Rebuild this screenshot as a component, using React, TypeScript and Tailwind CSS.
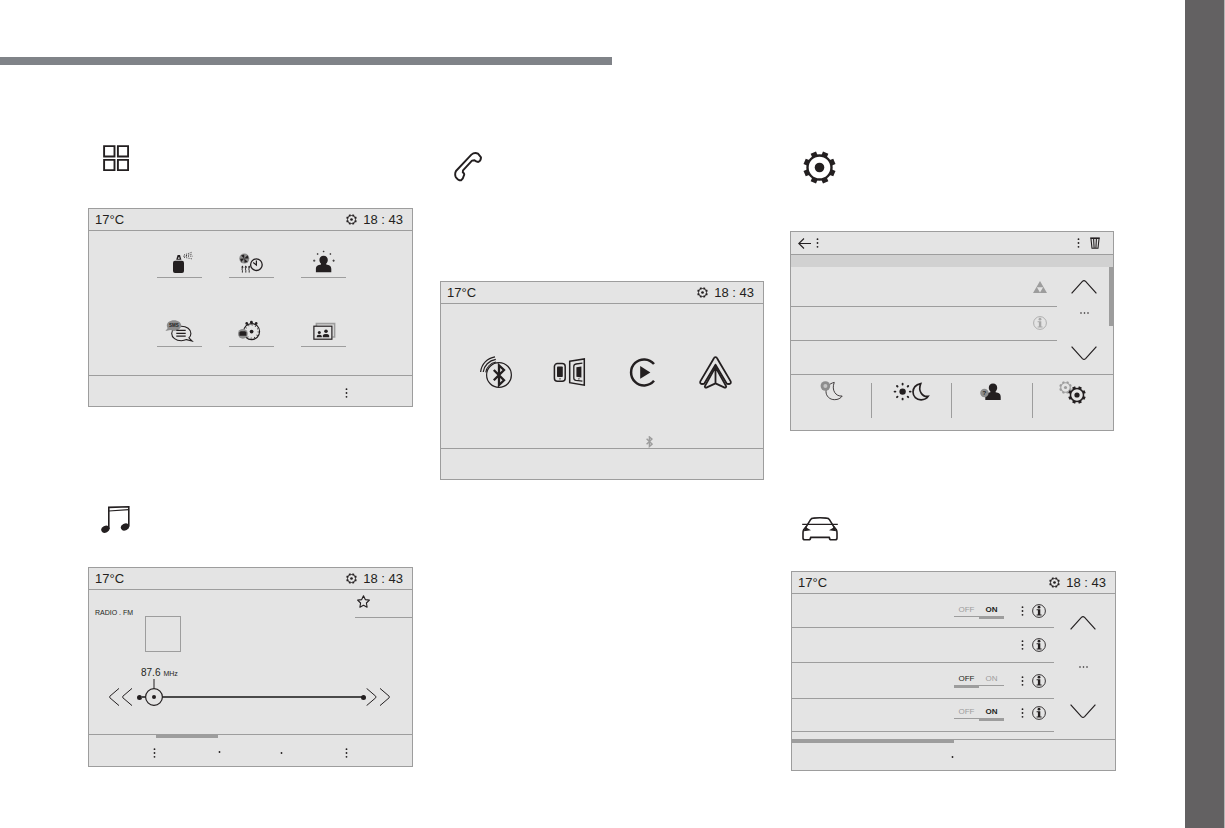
import type { ReactNode } from "react";
import { useState } from "react";

const INK = "#231f20";
const GREY = "#9d9d9d";

function Gear({ size, color = INK, ring = 2.6, hub = 4.8 }: { size: number; color?: string; ring?: number; hub?: number }) {
  const teeth = [22.5, 67.5, 112.5, 157.5, 202.5, 247.5, 292.5, 337.5];
  return (
    <svg width={size} height={size} viewBox="0 0 33 33" aria-hidden="true">
      <circle cx="16.5" cy="16.5" r="12" fill="none" stroke={color} strokeWidth={ring} />
      {teeth.map((a) => (
        <rect key={a} x="13.6" y="0.4" width="5.8" height="4.4" fill={color} transform={`rotate(${a} 16.5 16.5)`} />
      ))}
      <circle cx="16.5" cy="16.5" r={hub} fill={color} />
    </svg>
  );
}

function Dots({ count = 3 }: { count?: 1 | 3 }) {
  return (
    <svg width="3" height="10" viewBox="0 0 3 10" fill={INK} aria-hidden="true">
      {count === 3 && <circle cx="1.5" cy="1.2" r="0.9" />}
      <circle cx="1.5" cy="5" r="0.9" />
      {count === 3 && <circle cx="1.5" cy="8.8" r="0.9" />}
    </svg>
  );
}

function Info({ color = INK }: { color?: string }) {
  return (
    <svg width="14" height="14" viewBox="0 0 14 14" aria-hidden="true">
      <circle cx="7" cy="7" r="6.4" fill="none" stroke={color} strokeWidth="0.9" />
      <circle cx="7" cy="3.2" r="1.4" fill={color} />
      <path d="M4.6 5.2H8.3V10.6H9.6V11.6H4.6V10.6H5.9V6.2H4.6Z" fill={color} />
    </svg>
  );
}

function Chevron({ down = false }: { down?: boolean }) {
  return (
    <svg width="26" height="14" viewBox="0 0 26 14" fill="none" stroke={INK} strokeWidth="1.2" aria-hidden="true">
      <path d={down ? "M.6 .6 11.4 12.6Q13 14 14.6 12.6L25.4 .6" : "M.6 13.4 11.4 1.4Q13 0 14.6 1.4L25.4 13.4"} />
    </svg>
  );
}

function Scroller({ className, dotsClassName = "" }: { className: string; dotsClassName?: string }) {
  return (
    <div className={`flex flex-col items-center justify-between ${className}`}>
      <button aria-label="Scroll up" className="block"><Chevron /></button>
      <svg width="9" height="2" viewBox="0 0 9 2" fill={INK} className={dotsClassName} aria-hidden="true">
        <circle cx="1" cy="1" r="0.8" />
        <circle cx="4.5" cy="1" r="0.8" />
        <circle cx="8" cy="1" r="0.8" />
      </svg>
      <button aria-label="Scroll down" className="block"><Chevron down /></button>
    </div>
  );
}

function StatusBar() {
  return (
    <header className="flex h-[22px] shrink-0 items-center border-b border-[#9d9d9d] pr-[9px] pl-[6px] text-[13px] leading-5">
      <span>17°C</span>
      <span className="ml-auto flex items-center gap-[6px]">
        <Gear size={11} ring={2.8} hub={4} />
        <span className="whitespace-pre">18 : 43</span>
      </span>
    </header>
  );
}

function Screen({ label, className = "", children }: { label: string; className?: string; children: ReactNode }) {
  return (
    <section aria-label={label} className={`flex flex-col border border-[#9d9d9d] bg-[#e4e4e4] ${className}`}>
      {children}
    </section>
  );
}

function AppIcon({ children }: { children: ReactNode }) {
  return (
    <svg width="45" height="28" viewBox="0 0 45 28" aria-hidden="true">
      {children}
    </svg>
  );
}

const person = "c-2.7 0-4.2 1.9-4.2 4.2 0 1.6.7 2.8 1.6 3.6v.9c-2.9.5-5.1 1.4-5.1 4.6v3.2h15.4v-3.2c0-3.2-2.2-4.1-5.1-4.6v-.9c.9-.8 1.6-2 1.6-3.6 0-2.3-1.5-4.2-4.2-4.2z";

const apps: { label: string; icon: ReactNode }[] = [
  {
    label: "Fragrance",
    icon: (
      <>
        <rect x="16" y="11.7" width="11" height="12.2" rx="2" fill={INK} />
        <path d="M20.6 6h2.4l1.4 4.7h-5.2z" fill={INK} />
        <path d="M21 8.6h1.6v1.2H21z" fill="#e4e4e4" />
        <path d="M26.4 7.2H36M27 6 35.6 3M27 8.2 35.6 10M29 6.6 35 5.2" stroke={INK} strokeWidth="0.9" strokeDasharray="1 1.3" fill="none" />
      </>
    ),
  },
  {
    label: "Climate programming",
    icon: (
      <>
        <circle cx="15.3" cy="9.6" r="5" fill="#8d8d8d" />
        <path d="M15.3 9.6 12 6.4l3.2-1zM15.3 9.6l3.2-3.4 1 3.2zM15.3 9.6l3.4 3.2-3.2 1zM15.3 9.6 12.2 13l-1.1-3.2z" fill={INK} />
        <path d="M13.4 23.6v-2.3q-.8-1.2 0-2.4v-1.6M16.8 23.6v-2.3q-.8-1.2 0-2.4v-1.6M20.2 23.6v-2.3q-.8-1.2 0-2.4v-1.6" stroke={INK} strokeWidth="0.9" fill="none" />
        <path d="m12.1 18.4 1.3-2 1.3 2zM15.5 18.4l1.3-2 1.3 2zM18.9 18.4l1.3-2 1.3 2z" fill={INK} />
        <circle cx="27.4" cy="15.7" r="5.8" fill="none" stroke={INK} strokeWidth="1.3" />
        <path d="M27.4 11.6V16L24.2 13.6" stroke={INK} strokeWidth="1.2" fill="none" />
      </>
    ),
  },
  {
    label: "Profile",
    icon: (
      <>
        <path d={`M22.6 6.8${person}`} fill={INK} />
        <path d="M12 11.7h2.4M13.2 10.5v2.4M31.4 11.7h2.4M32.6 10.5v2.4M15.8 5h1.6M16.6 4.2v1.6M28.6 5h1.6M29.4 4.2v1.6M21.8 2.5h1.6M22.6 1.7v1.6" stroke={INK} strokeWidth="0.7" />
      </>
    ),
  },
  {
    label: "Messages",
    icon: (
      <>
        <path d="M24.3 8.2c5.4 0 9.6 3.2 9.6 7.2 0 1.7-.8 3.2-2 4.4l3.2 3.2-5.6-1.4c-1.5.7-3.2 1.1-5.2 1.1-5.4 0-9.6-3.2-9.6-7.3 0-4 4.2-7.2 9.6-7.2z" fill="none" stroke={INK} strokeWidth="1.1" />
        <path d="M17 2.3c4 0 7.2 2.3 7.2 5.3s-3.2 5.3-7.2 5.3c-1.3 0-2.6-.3-3.7-.8L8.4 13l2.2-2.8c-.5-.8-.8-1.7-.8-2.6 0-3 3.2-5.3 7.2-5.3z" fill="#8d8d8d" />
        <text x="17" y="9.3" textAnchor="middle" fontSize="4.5" fontWeight="700" fill={INK}>SMS</text>
        <path d="M19.3 12.4h9.4M19.3 15.3h9.4M19.3 18.2h9.4" stroke={INK} strokeWidth="1.3" />
      </>
    ),
  },
  {
    label: "Timer",
    icon: (
      <>
        <circle cx="22.6" cy="13.6" r="8" fill="none" stroke={INK} strokeWidth="1.1" />
        <circle cx="22.6" cy="13.6" r="6.6" fill="none" stroke={INK} strokeWidth="1.2" strokeDasharray="0.8 2.65" />
        <circle cx="17.7" cy="5.4" r="1.3" fill={INK} />
        <circle cx="22.4" cy="4.2" r="1.4" fill={INK} />
        <circle cx="27.2" cy="5.4" r="1.3" fill={INK} />
        <path d="m17.7 5.4 1.4 1.8M22.4 4.2v2M27.2 5.4l-1.4 1.8" stroke={INK} strokeWidth="1.2" />
        <circle cx="22.6" cy="13.6" r="1.9" fill={INK} />
        <circle cx="13.9" cy="15.8" r="4.9" fill="#8d8d8d" />
        <path d="M10.4 14.6 11.6 13.2h4.6l1.2 1.4v3.2h-7z" fill={INK} />
      </>
    ),
  },
  {
    label: "Photos",
    icon: (
      <>
        <path d="M15.4 8V5.6H33.6V19H31.6" fill="none" stroke={GREY} strokeWidth="1.6" />
        <rect x="12.9" y="8.2" width="18" height="13" fill="none" stroke={INK} strokeWidth="1.2" />
        <circle cx="18.3" cy="14.6" r="1.5" fill={INK} />
        <circle cx="25" cy="13.3" r="1.8" fill={INK} />
        <path d="M15.8 19.2v-1.2q.4-1.2 2.5-1.2t2.5 1.2v1.2zM21.8 19.2v-1.8q.5-1.4 3.2-1.4t3.2 1.4v1.8z" fill={INK} />
      </>
    ),
  },
];

const phoneModes: { label: string; icon: ReactNode }[] = [
  {
    label: "Bluetooth",
    icon: (
      <>
        <circle cx="19" cy="19" r="12.4" fill="none" stroke={INK} strokeWidth="1.2" />
        <path d="M13.8 14 24 24.3 19 29V9.4L24 14 13.8 24.3" fill="none" stroke={INK} strokeWidth="2.3" />
        <path d="M.6 16C1.4 8 7.4 2 15 .8M3.2 16C4 9.6 9 4.6 15.8 3.4M5.8 16.4C6.6 11.2 10.6 7 16 6" fill="none" stroke={INK} strokeWidth="1.2" />
      </>
    ),
  },
  {
    label: "Mirror screen",
    icon: (
      <>
        <rect x="1.4" y="7.6" width="10.8" height="17.6" rx="3" fill="none" stroke={INK} strokeWidth="1.5" />
        <rect x="4" y="10.6" width="5.8" height="10.4" rx="0.8" fill={INK} />
        <path d="M5.8 22.4h2.4l-1.2 1.4z" fill={INK} />
        <path d="M16.7 5.3 31.3 3V29.2L16.7 26.7Z" fill="none" stroke={INK} strokeWidth="1.5" />
        <path d="M29.4 7.2 23 8Q20.8 8.4 20.8 10.4V22Q20.8 24 23 24.4L29.4 25.2" fill="none" stroke={INK} strokeWidth="1.3" />
        <path d="M23.4 11.2 28.4 10.6V21.4L23.4 20.8Z" fill={INK} />
        <path d="M24.8 22.4h2.2l-1.1 1.4z" fill={INK} />
      </>
    ),
  },
  {
    label: "CarPlay",
    icon: (
      <>
        <path d="M28 8A13 13 0 1 0 28 24.8" fill="none" stroke={INK} strokeWidth="2.5" />
        <path d="M14.2 10 24.4 16.4 14.2 22.8Z" fill={INK} />
      </>
    ),
  },
  {
    label: "Android Auto",
    icon: (
      <g fill="none" stroke={INK} strokeWidth="1.8" strokeLinejoin="round">
        <path d="M16.5 1.2Q15.3 1.2 14.5 3L1.3 25.4Q.7 27.8 2.9 28L5.2 27.8 16.5 8.6 27.8 27.8 30.1 28Q32.3 27.8 31.7 25.4L18.5 3Q17.7 1.2 16.5 1.2Z" />
        <path d="M16.5 11 5.8 30.4Q6 31.9 7.4 31.6L16.5 27.4 25.6 31.6Q27 31.9 27.2 30.4ZM16.5 11V27.4" />
      </g>
    ),
  },
];

const moon = "M9 0C3.6 1.2 0 4.8 0 9.4 0 14.4 4 18 9.4 18c3.6 0 6.6-1.4 8.2-3.8C10.6 15 5.6 8 9 0Z";

const shortcuts: { label: string; icon: ReactNode }[] = [
  {
    label: "Dark screen",
    icon: (
      <svg width="22" height="20" viewBox="0 0 22 20" className="overflow-visible" aria-hidden="true">
        <path d={moon} transform="translate(6 -.6) scale(.92 .96)" fill="none" stroke={INK} strokeWidth="0.9" />
        <circle cx="5.4" cy="3" r="4.8" fill="#8d8d8d" />
        <circle cx="5.4" cy="3" r="2" fill="#c4c4c4" />
      </svg>
    ),
  },
  {
    label: "Brightness",
    icon: (
      <svg width="36" height="20" viewBox="0 0 36 20" className="overflow-visible" aria-hidden="true">
        <circle cx="9.6" cy="8.6" r="3.2" fill={INK} />
        <g stroke={INK} strokeWidth="1.9" strokeLinecap="round">
          <path d="M9.6 .8v.8M9.6 15.6v.8M1.6 8.6h.8M16.8 8.6h.8M4 3l.5.5M14.7 13.7l.5.5M15.2 3l-.5.5M4.5 13.7 4 14.2" />
        </g>
        <path d={moon} transform="translate(20 .6) scale(.86 .9)" fill="none" stroke={INK} strokeWidth="1.9" />
      </svg>
    ),
  },
  {
    label: "Profiles",
    icon: (
      <svg width="24" height="20" viewBox="0 0 24 20" className="overflow-visible" aria-hidden="true">
        <path d={`M13 .6${person}`} fill={INK} />
        <circle cx="4.4" cy="10" r="4.2" fill="#8d8d8d" />
        <text x="4.4" y="12.2" textAnchor="middle" fontSize="6" fontWeight="700" fill={INK}>?</text>
      </svg>
    ),
  },
  {
    label: "Configuration",
    icon: (
      <span className="flex">
        <span className="-mt-0.5 block"><Gear size={13} color={GREY} ring={2.8} hub={4} /></span>
        <span className="-ml-1 mt-[3px] block"><Gear size={18} ring={2.8} /></span>
      </span>
    ),
  },
];

function Toggle({ name, initial }: { name: string; initial: boolean }) {
  const [on, setOn] = useState(initial);
  return (
    <div role="group" aria-label={name} className="flex items-start text-[8px] leading-[10px]">
      <button
        aria-pressed={!on}
        onClick={() => setOn(false)}
        className={`w-[25px] border-[#9d9d9d] ${on ? "h-[13px] border-b text-[#9d9d9d]" : "h-[15px] border-b-3"}`}
      >
        OFF
      </button>
      <button
        aria-pressed={on}
        onClick={() => setOn(true)}
        className={`w-[25px] border-[#9d9d9d] ${on ? "h-[15px] border-b-3 font-bold" : "h-[13px] border-b text-[#9d9d9d]"}`}
      >
        ON
      </button>
    </div>
  );
}

function VehicleRow({ name, toggle, className }: { name: string; toggle?: boolean; className: string }) {
  return (
    <li className={`flex items-center justify-end border-b border-[#9d9d9d] pr-2 ${className}`}>
      {toggle !== undefined && <Toggle name={name} initial={toggle} />}
      <button aria-label={`${name} options`} className="ml-[17px] block"><Dots /></button>
      <button aria-label={`${name} information`} className="ml-2 block"><Info /></button>
    </li>
  );
}

function Tuner() {
  const [freq, setFreq] = useState(87.6);
  const shift = ((freq - 87.6) / 20.4) * 100;
  return (
    <div>
      <label htmlFor="tuner" className="mt-[15px] ml-[52px] flex items-baseline gap-[3px] text-[10px] leading-3">
        {freq.toFixed(1)} <span className="text-[7px]">MHz</span>
      </label>
      <div className="mt-2 flex items-center pr-[22px] pl-5">
        <button aria-label="Seek down" className="block">
          <svg width="23" height="18" viewBox="0 0 23 18" fill="none" stroke={INK} strokeWidth="1" aria-hidden="true">
            <path d="M10 .4.9 8.2Q.3 9 .9 9.8L10 17.6M23 .4 13.9 8.2Q13.3 9 13.9 9.8L23 17.6" />
          </svg>
        </button>
        <div className="relative ml-[5px] flex h-[18px] flex-1 items-center">
          <span className="size-[5px] rounded-full bg-[#231f20]" />
          <span className="-mx-px h-0.5 flex-1 bg-[#4a4a4a]" />
          <span className="size-[5px] rounded-full bg-[#231f20]" />
          <span className="absolute inset-y-0 right-0 left-2">
            <span className="absolute top-0 size-[18px]" style={{ left: `${shift}%` }}>
              <svg width="18" height="27" viewBox="0 -9 18 27" className="absolute bottom-0 left-0" aria-hidden="true">
                <path d="M9-9V0" stroke={INK} strokeWidth="1" />
                <circle cx="9" cy="9" r="8.4" fill="#e4e4e4" stroke={INK} strokeWidth="1.2" />
                <circle cx="9" cy="9" r="2" fill={INK} />
              </svg>
            </span>
          </span>
          <input
            id="tuner"
            type="range"
            min="87.6"
            max="108"
            step="0.1"
            value={freq}
            onChange={(e) => setFreq(Number(e.target.value))}
            className="absolute inset-0 w-full cursor-pointer opacity-0"
          />
        </div>
        <button aria-label="Seek up" className="block">
          <svg width="24" height="18" viewBox="0 0 24 18" fill="none" stroke={INK} strokeWidth="1" aria-hidden="true">
            <path d="M.6 .4 9.7 8.2Q10.3 9 9.7 9.8L.6 17.6M14 .4 23.1 8.2Q23.7 9 23.1 9.8L14 17.6" />
          </svg>
        </button>
      </div>
    </div>
  );
}

export default function App() {
  return (
    <div className="flex min-h-screen bg-white font-['Liberation_Sans',Arial,sans-serif] text-[#231f20]">
      <main className="flex-1 pt-[57px] pb-14">
        <div className="h-2 w-[612px] max-w-full bg-[#808388]" />
        <div className="grid grid-cols-[325fr_325fr_326fr] items-start gap-[26px] pr-[69px] pl-[88px]">
          <div className="pt-20">
            <div className="h-[63px] pl-[15px]">
              <svg width="26" height="26" viewBox="0 0 26 26" fill="none" stroke={INK} strokeWidth="1.9" aria-hidden="true">
                <path d="M1.1 1.1h10.4v10.4H1.1zM14.9 1.1h10.2v10.4H14.9zM1.1 14.9h10.4v10.2H1.1zM14.9 14.9h10.2v10.2H14.9z" />
              </svg>
            </div>
            <Screen label="Applications">
              <StatusBar />
              <div className="grid h-36 grid-cols-[45px_45px_45px] content-start gap-x-[27px] gap-y-10 pt-[18px] pl-[68px]">
                {apps.map((a) => (
                  <button key={a.label} aria-label={a.label} className="block h-[29px] border-b border-[#9d9d9d]">
                    <AppIcon>{a.icon}</AppIcon>
                  </button>
                ))}
              </div>
              <footer className="flex h-[31px] items-center justify-end border-t border-[#9d9d9d] pt-1 pr-16">
                <button aria-label="More options" className="block"><Dots /></button>
              </footer>
            </Screen>

            <div className="mt-[99px] h-[61px] pl-[13px]">
              <svg width="29" height="28" viewBox="0 0 29 28" fill="none" stroke={INK} aria-hidden="true">
                <path d="M7.8 23V1.4L27.8.8V20.6" strokeWidth="1.6" />
                <path d="M7.8 5 27.8 3.6" strokeWidth="1.2" />
                <ellipse cx="4.4" cy="23.2" rx="4.3" ry="3.4" transform="rotate(-28 4.4 23.2)" fill={INK} stroke="none" />
                <ellipse cx="24" cy="21" rx="4.3" ry="3.4" transform="rotate(-28 24 21)" fill={INK} stroke="none" />
              </svg>
            </div>
            <Screen label="Radio media">
              <StatusBar />
              <div className="h-36">
                <div className="flex items-start pl-[6px]">
                  <span className="mt-[19px] w-[50px] text-[7px] leading-2">RADIO . FM</span>
                  <div className="mt-[26px] size-9 border border-[#9d9d9d]" />
                  <button aria-label="Add to favourites" className="ml-auto block h-7 w-[57px] border-b border-[#9d9d9d] pb-1 pl-0.5">
                    <svg width="13" height="13" viewBox="0 0 13 13" fill="none" stroke={INK} strokeWidth="1.1" strokeLinejoin="round" aria-hidden="true">
                      <path d="M6.5.8 8.3 4.6 12.4 5.1 9.4 8 10.1 12.2 6.5 10.2 2.9 12.2 3.6 8 .6 5.1 4.7 4.6Z" />
                    </svg>
                  </button>
                </div>
                <Tuner />
              </div>
              <nav aria-label="Radio" className="grid h-8 grid-cols-[67px_65px_62px_65px] border-t border-[#9d9d9d]">
                <button aria-label="Sources" className="flex items-center justify-end pt-1"><Dots /></button>
                <button aria-label="Frequency" className="flex flex-col items-end">
                  <span className="h-[3px] w-[62px] self-start bg-[#9d9d9d]" />
                  <span className="mt-[9px]"><Dots count={1} /></span>
                </button>
                <button aria-label="Presets" className="flex items-center justify-end pt-1"><Dots count={1} /></button>
                <button aria-label="Options" className="flex items-center justify-end pt-1"><Dots /></button>
              </nav>
            </Screen>
          </div>

          <div className="pt-[87px] pl-px">
            <div className="h-[129px] pl-[14px]">
              <svg width="28" height="30" viewBox="0 0 28 30" fill="none" stroke={INK} strokeWidth="1.9" strokeLinejoin="round" aria-hidden="true">
                <path d="M2 19 17.4 2.6Q20.4 0 24 1.6L27 5.4Q27 8.4 24.2 10 22 9.8 20.4 8.2L18 8.6 9 18.4 8.8 20.4Q11 21.6 9.8 23.8 9.2 27 7 28.4 4 28.4 1.8 25.2.4 22 2 19Z" />
              </svg>
            </div>
            <Screen label="Telephone">
              <StatusBar />
              <div className="flex h-36 flex-col pt-[52px] pl-[19px]">
                <div className="grid grid-cols-[73px_73px_73px_73px]">
                  {phoneModes.map((m) => (
                    <button key={m.label} aria-label={m.label} className="flex justify-center">
                      <svg width="33" height="33" viewBox="0 0 33 33" aria-hidden="true">{m.icon}</svg>
                    </button>
                  ))}
                </div>
                <svg width="7" height="12" viewBox="0 0 7 12" fill="none" stroke={GREY} strokeWidth="1.4" className="mt-auto ml-[186px]" aria-hidden="true">
                  <path d="M.6 2.7 6 8.1 3.4 10.5V.9L6 3.1.6 8.3" />
                </svg>
              </div>
              <footer className="h-[31px] border-t border-[#9d9d9d]" />
            </Screen>
          </div>

          <div className="pt-[86px]">
            <div className="h-20 pl-[13px]"><Gear size={33} ring={2.4} /></div>
            <Screen label="Settings" className="mr-0.5">
              <header className="flex h-[23px] items-center border-b border-[#9d9d9d] pr-[13px] pl-[7px]">
                <button aria-label="Back" className="block">
                  <svg width="13" height="11" viewBox="0 0 13 11" fill="none" stroke={INK} strokeWidth="1.1" aria-hidden="true">
                    <path d="M6 .5.8 5.5 6 10.5M.8 5.5H13" />
                  </svg>
                </button>
                <span className="ml-[5px]"><Dots /></span>
                <button aria-label="Options" className="ml-auto block"><Dots /></button>
                <button aria-label="Delete" className="ml-[10px] block">
                  <svg width="10" height="12" viewBox="0 0 10 12" fill="none" stroke={INK} aria-hidden="true">
                    <path d="M.2 1.2H9.8" strokeWidth="1.6" />
                    <path d="M1 2 2 11.2H8L9 2M3.6 2 4.1 11M6.4 2 5.9 11" strokeWidth="1.1" />
                  </svg>
                </button>
              </header>
              <div className="h-3 bg-[#d1d1d1]" />
              <div className="flex h-[107px]">
                <ul className="w-[266px]">
                  <li className="flex h-10 items-center justify-end border-b border-[#9d9d9d] pr-[10px]">
                    <svg width="14" height="12" viewBox="0 0 14 12" fill={GREY} aria-hidden="true">
                      <path fillRule="evenodd" d="M7 0 14 12H0ZM3.9 6.2 7 11.4 10.1 6.2Z" />
                    </svg>
                  </li>
                  <li className="flex h-[34px] items-center justify-end border-b border-[#9d9d9d] pr-[10px] pb-0.5">
                    <button aria-label="Information" className="block"><Info color="#a8a8a8" /></button>
                  </li>
                  <li className="h-[33px]" />
                </ul>
                <Scroller className="ml-[14px] pt-[13px] pb-[14px]" dotsClassName="mb-[14px]" />
                <div className="ml-auto h-[59px] w-1 bg-[#9d9d9d]" />
              </div>
              <footer className="grid h-14 grid-cols-4 border-t border-[#9d9d9d] pt-2">
                {shortcuts.map((s) => (
                  <button
                    key={s.label}
                    aria-label={s.label}
                    className="flex h-[35px] items-start justify-center border-r border-[#9d9d9d] last:border-r-0"
                  >
                    {s.icon}
                  </button>
                ))}
              </footer>
            </Screen>

            <div className="mt-[86px] h-[54px] pl-3">
              <svg width="36" height="24" viewBox="0 0 36 24" fill="none" stroke={INK} strokeWidth="1.6" strokeLinejoin="round" aria-hidden="true">
                <path d="M2.6 12.4 8.4 2.8Q9.4 1.2 11.4 1.1 18 .5 24.6 1.1 26.6 1.2 27.6 2.8L33.4 12.4" />
                <path d="M.2 7.4H35.8" strokeWidth="1.1" />
                <path d="M4.4 9.6 1.6 12.8Q1 13.8 1 16V21Q1 22.8 2.8 22.8H6.6Q8.6 22.8 8.6 20.4H27.4Q27.4 22.8 29.4 22.8H33.2Q35 22.8 35 21V16Q35 13.8 34.4 12.8L31.6 9.6" />
                <path d="M3.4 10 9 13.2 1.8 14.2ZM32.6 10 27 13.2 34.2 14.2Z" fill={INK} stroke="none" />
              </svg>
            </div>
            <Screen label="Vehicle" className="ml-px">
              <StatusBar />
              <div className="flex h-[145px] pt-px">
                <ul className="w-[262px]">
                  <VehicleRow name="Function 1" toggle={true} className="h-[33px]" />
                  <VehicleRow name="Function 2" className="h-[35px]" />
                  <VehicleRow name="Function 3" toggle={false} className="h-9" />
                  <VehicleRow name="Function 4" toggle={true} className="h-[33px] pb-1" />
                </ul>
                <Scroller className="ml-4 pt-[21px] pb-[21px]" />
              </div>
              <nav aria-label="Vehicle" className="grid h-[31px] grid-cols-2 border-t border-[#9d9d9d]">
                <button aria-label="Driving functions" className="flex flex-col items-end">
                  <span className="h-[3px] w-full bg-[#9d9d9d]" />
                  <span className="mt-[9px]"><Dots count={1} /></span>
                </button>
                <button aria-label="Vehicle settings" />
              </nav>
            </Screen>
          </div>
        </div>
      </main>
      <aside className="w-10 shrink-0 border-r border-[#b5b4b4] bg-[#636162]" />
    </div>
  );
}
